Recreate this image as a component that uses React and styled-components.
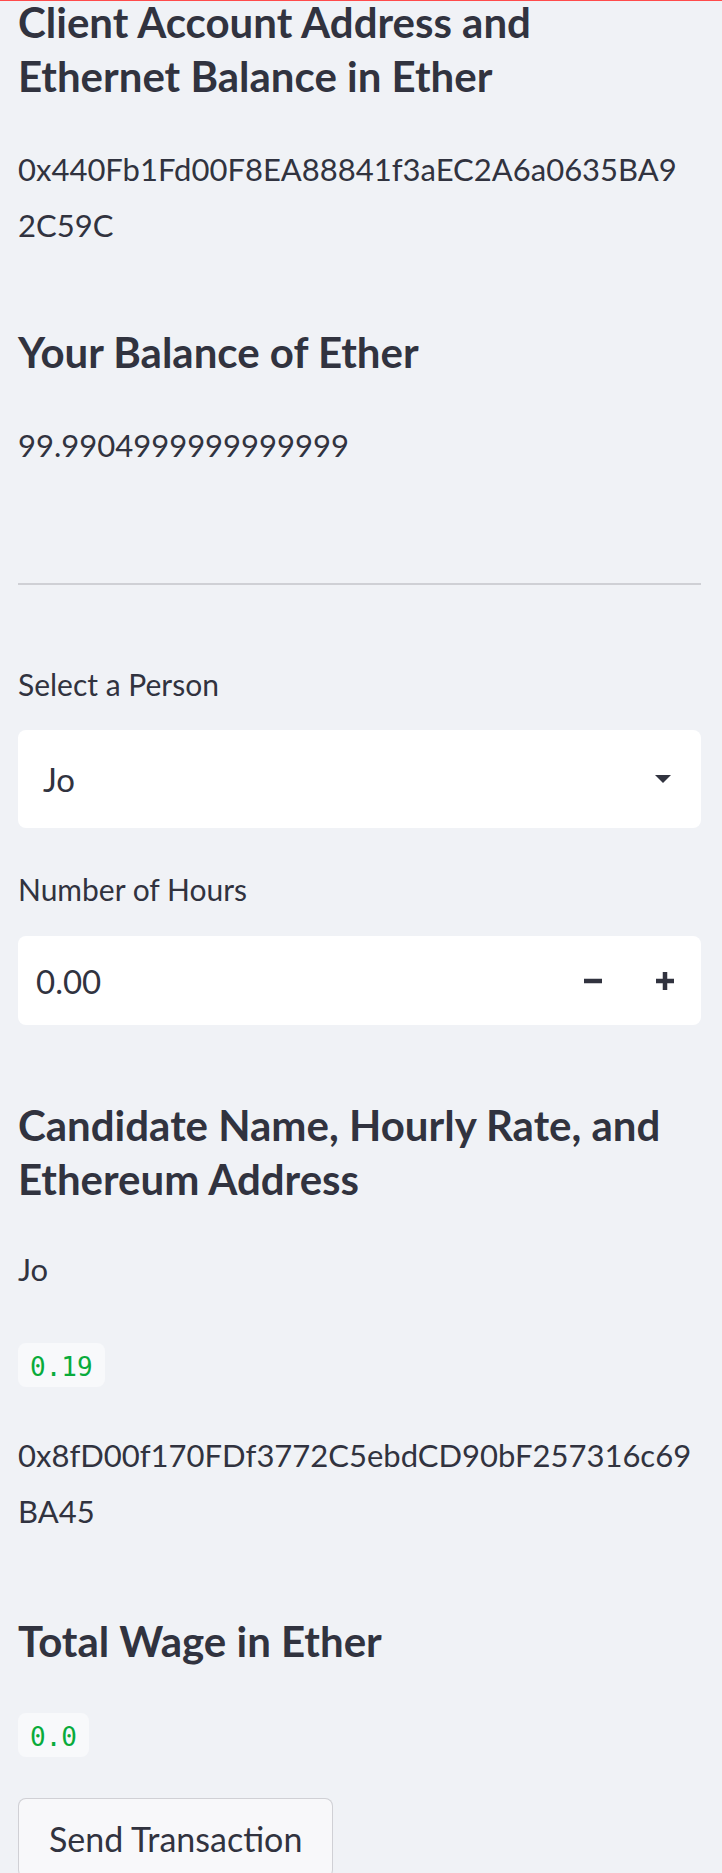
import styled, { createGlobalStyle } from "styled-components";

const GlobalStyle = createGlobalStyle`
  body {
    margin: 0;
    background-color: #f0f2f6;
  }
  * {
    box-sizing: border-box;
  }
`;

export default function App() {
  return (
    <>
      <GlobalStyle />
      <TopLine />
      <Sidebar>
        <Heading $mt={-5}>Client Account Address and Ethernet Balance in Ether</Heading>
        <Text $mt={38}>
          0x440Fb1Fd00F8EA88841f3aEC2A6a0635BA9<wbr />2C59C
        </Text>

        <Heading $mt={72}>Your Balance of Ether</Heading>
        <Text $mt={38}>99.9904999999999999</Text>

        <Divider />

        <Label $mt={79}>Select a Person</Label>
        <Select>
          <span>Jo</span>
          <svg width="16" height="8" viewBox="0 0 16 8">
            <path d="M0 0 L16 0 L8 8 Z" fill="#31333f" />
          </svg>
        </Select>

        <Label $mt={41}>Number of Hours</Label>
        <NumberInput>
          <span>0.00</span>
          <Steps>
            <Step>
              <svg width="18" height="18" viewBox="0 0 18 18">
                <rect x="0" y="6.75" width="18" height="4.5" fill="#31333f" />
              </svg>
            </Step>
            <Step>
              <svg width="18" height="18" viewBox="0 0 18 18">
                <rect x="0" y="6.75" width="18" height="4.5" fill="#31333f" />
                <rect x="6.75" y="0" width="4.5" height="18" fill="#31333f" />
              </svg>
            </Step>
          </Steps>
        </NumberInput>

        <Heading $mt={73}>Candidate Name, Hourly Rate, and Ethereum Address</Heading>
        <Text $mt={35}>Jo</Text>
        <Code $mt={46}>0.19</Code>
        <Text $mt={40}>
          0x8fD00f170FDf3772C5ebdCD90bF257316c69<wbr />BA45
        </Text>

        <Heading $mt={75}>Total Wage in Ether</Heading>
        <Code $mt={45}>0.0</Code>

        <Button>Send Transaction</Button>
      </Sidebar>
    </>
  );
}

const TopLine = styled.div`
  position: fixed;
  top: 0;
  left: 0;
  right: 0;
  height: 1px;
  background: #ff4b4b;
  z-index: 10;
`;

const Sidebar = styled.div`
  display: flex;
  flex-direction: column;
  align-items: flex-start;
  padding: 0 21px 0 18px;
  font-family: Lato, "Noto Sans", sans-serif;
  color: #31333f;
`;

const Heading = styled.h2`
  margin: ${(p) => p.$mt}px 0 0;
  width: 100%;
  font-size: 42px;
  font-weight: 700;
  line-height: 54px;
`;

const Text = styled.p`
  margin: ${(p) => p.$mt}px 0 0;
  width: 100%;
  font-size: 31px;
  font-weight: 400;
  line-height: 56px;
  overflow-wrap: break-word;
`;

const Divider = styled.hr`
  width: 100%;
  margin: 110px 0 0;
  border: none;
  height: 2px;
  background-color: #cfd0d5;
`;

const Label = styled.label`
  display: block;
  margin-top: ${(p) => p.$mt}px;
  font-size: 30px;
  line-height: 40px;
`;

const Select = styled.div`
  margin-top: 26px;
  width: 100%;
  height: 98px;
  border-radius: 8px;
  background-color: #ffffff;
  padding: 0 30px 0 25px;

  display: flex;
  align-items: center;
  justify-content: space-between;

  font-size: 33px;
`;

const NumberInput = styled.div`
  margin-top: 27px;
  width: 100%;
  height: 89px;
  border-radius: 8px;
  background-color: #ffffff;
  padding-left: 18px;

  display: flex;
  align-items: center;
  justify-content: space-between;

  font-size: 33px;
`;

const Steps = styled.div`
  display: flex;
  height: 100%;
`;

const Step = styled.div`
  width: 72px;
  height: 100%;
  display: flex;
  align-items: center;
  justify-content: center;
`;

const Code = styled.code`
  margin-top: ${(p) => p.$mt}px;
  height: 44px;
  padding: 4px 12px 0;
  border-radius: 8px;
  background-color: #f8f9fb;
  color: #09ab3b;
  font-family: "DejaVu Sans Mono", "Liberation Mono", monospace;
  font-size: 26px;
  line-height: 40px;
`;

const Button = styled.button`
  margin-top: 41px;
  height: 80px;
  padding: 0 30px;
  border: 1px solid rgba(49, 51, 63, 0.2);
  border-radius: 8px;
  background-color: #f8f8fa;
  color: #31333f;
  font-family: Lato, "Noto Sans", sans-serif;
  font-size: 34px;
  cursor: pointer;
`;
